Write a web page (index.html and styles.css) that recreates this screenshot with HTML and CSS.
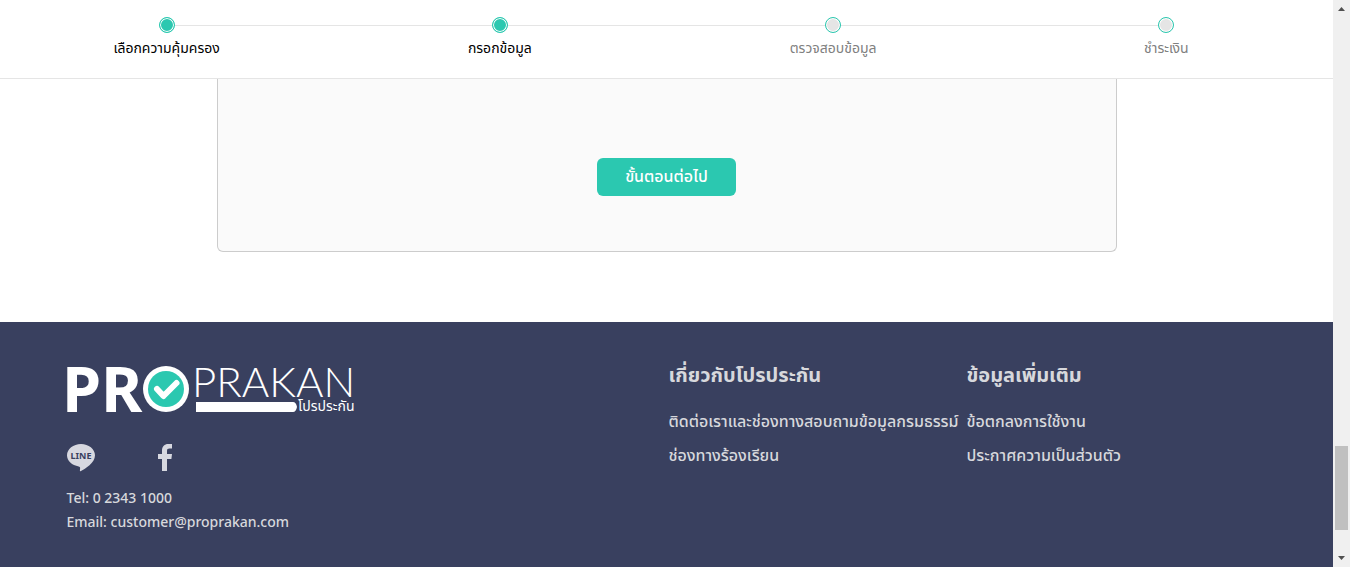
FILE: index.html
```html
<!DOCTYPE html>
<html lang="th">
<head>
<meta charset="utf-8">
<title>โปรประกัน</title>
<link rel="stylesheet" href="styles.css">
</head>
<body>
<div class="page">
  <header class="header">
    <ol class="steps">
      <li class="step done"><span class="dot"></span><span>เลือกความคุ้มครอง</span></li>
      <li class="step done"><span class="dot"></span><span>กรอกข้อมูล</span></li>
      <li class="step"><span class="dot"></span><span>ตรวจสอบข้อมูล</span></li>
      <li class="step"><span class="dot"></span><span>ชำระเงิน</span></li>
    </ol>
  </header>
  <main class="main">
    <section class="panel">
      <button class="next" type="button">ขั้นตอนต่อไป</button>
    </section>
  </main>
  <footer class="footer">
    <div class="footer-grid">
      <div class="brand">
        <svg class="logo" width="290" height="50" viewBox="0 0 290 50" role="img" aria-label="PROPRAKAN โปรประกัน">
          <text class="logo-bold" x="-5" y="49">PR</text>
          <circle cx="99" cy="26" r="23" fill="#fff"/>
          <circle cx="99" cy="26" r="18" fill="#2bc8b0"/>
          <path d="M90 26l6.500 7 13-13" fill="none" stroke="#fff" stroke-width="6" stroke-linecap="round" stroke-linejoin="round"/>
          <text class="logo-light" x="125" y="34">PRAKAN</text>
          <path d="M129 39h97q3 0 4 5-1 5-4 5h-97z" fill="#fff"/>
          <text class="logo-thai" x="231" y="48">โปรประกัน</text>
        </svg>
        <div class="social">
          <a href="#line" aria-label="LINE">
            <svg width="28" height="28" viewBox="0 0 28 28"><path d="M14 0C6.300 0 0 5 0 11.300c0 5.600 5 10.300 11.700 11.100 1.700.4 1.600 1.100 1.200 4.200-.1.700.4.800 1.100.4C18 24.800 28 19.200 28 11.300 28 5 21.700 0 14 0z" fill="#d7d8e0"/><text class="line-word" x="14" y="15" text-anchor="middle">LINE</text></svg>
          </a>
          <a href="#facebook" aria-label="Facebook">
            <svg width="16" height="28" viewBox="0 0 16 28"><path d="M5 27V15H1v-5h4V6.500C5 2.500 7.500 0 11.300 0H15v4.600h-2.500C10.700 4.600 10 5.400 10 7v3h5l-.6 5H10v12z" fill="#d7d8e0"/></svg>
          </a>
        </div>
        <address class="contact">
          <a href="tel:023431000">Tel: 0 2343 1000</a>
          <a href="mailto:customer@proprakan.com">Email: customer@proprakan.com</a>
        </address>
      </div>
      <nav class="links">
        <h2>เกี่ยวกับโปรประกัน</h2>
        <a href="#contact">ติดต่อเราและช่องทางสอบถามข้อมูลกรมธรรม์</a>
        <a href="#complaint">ช่องทางร้องเรียน</a>
      </nav>
      <nav class="links">
        <h2>ข้อมูลเพิ่มเติม</h2>
        <a href="#terms">ข้อตกลงการใช้งาน</a>
        <a href="#privacy">ประกาศความเป็นส่วนตัว</a>
      </nav>
    </div>
  </footer>
</div>
<div class="scrollbar" aria-hidden="true">
  <svg width="17" height="17" viewBox="0 0 17 17"><path d="M5 11l3.500-4 3.500 4z" fill="#505050"/></svg>
  <span class="track"></span>
  <span class="thumb"></span>
  <svg width="17" height="17" viewBox="0 0 17 17"><path d="M5 6l3.500 4 3.500-4z" fill="#505050"/></svg>
</div>
</body>
</html>
```
FILE: styles.css
```css
* { box-sizing: border-box; }
body {
  margin: 0;
  display: flex;
  min-height: 100vh;
  background: #fff;
  font-family: "Noto Sans", "Noto Sans Thai", sans-serif;
  font-size: 14px;
}
.page { flex: 1; min-width: 0; display: flex; flex-direction: column; }
a { color: inherit; text-decoration: none; }

.header { border-bottom: 1px solid #e5e5e5; padding: 17px 0 20px; }
.steps { display: flex; margin: 0; padding: 0; list-style: none; }
.step {
  flex: 1;
  position: relative;
  display: flex;
  flex-direction: column;
  align-items: center;
  gap: 5px;
  line-height: 20px;
  color: #808080;
}
.step.done { color: #000; }
.step + .step::before {
  content: "";
  position: absolute;
  top: 8px;
  right: 50%;
  width: 100%;
  height: 1px;
  background: #e5e5e5;
}
.dot {
  position: relative;
  z-index: 1;
  width: 16px;
  height: 16px;
  border: 1px solid #2bc8b0;
  border-radius: 50%;
  background: #e5e5e5;
  box-shadow: inset 0 0 0 1px #fff;
}
.done .dot { background: #2bc8b0; }

.main { padding: 0 24px 70px; }
.panel {
  max-width: 900px;
  margin: 0 auto;
  padding: 79px 24px 55px;
  border: 1px solid #ccc;
  border-top: 0;
  border-radius: 0 0 6px 6px;
  background: #fafafa;
  text-align: center;
}
.next {
  display: block;
  min-width: 139px;
  height: 38px;
  margin: 0 auto;
  padding: 0 24px 2px;
  border: 0;
  border-radius: 6px;
  background: #2bc8b0;
  color: #fff;
  font: 500 16px/24px "Noto Sans", "Noto Sans Thai", sans-serif;
}

.footer { flex: 1; background: #39405f; color: #d7d8dc; padding: 40px 24px 32px; }
.footer-grid {
  display: grid;
  grid-template-columns: 1fr 298px 300px;
  max-width: 1200px;
  margin: 0 auto;
}
.logo { display: block; margin-top: 1px; overflow: visible; }
.logo text { fill: #fff; }
.logo-bold { font: 700 63px "Noto Sans", sans-serif; }
.logo-light { font: 300 42px Lato, sans-serif; }
.logo-thai { font: 400 14px "Noto Sans Thai", sans-serif; }
.line-word { font: 700 9px "Noto Sans", sans-serif; fill: #39405f; }
.social { display: flex; gap: 62px; margin-top: 31px; }
.social svg { display: block; }
.contact {
  display: flex;
  flex-direction: column;
  margin-top: 14px;
  font-style: normal;
  font-weight: 500;
  font-size: 14px;
  line-height: 24px;
}
.links { display: flex; flex-direction: column; gap: 10px; font-size: 16px; line-height: 24px; font-weight: 500; white-space: nowrap; }
.links h2 { margin: 0 0 11px; font-size: 20px; line-height: 26px; font-weight: 700; }

.scrollbar { width: 17px; display: flex; flex-direction: column; align-items: center; background: #f0f0f0; }
.scrollbar svg { display: block; }
.track { flex: 429; }
.thumb { flex: 84; width: 13px; background: #c0c0c0; margin-bottom: 20px; }
```
